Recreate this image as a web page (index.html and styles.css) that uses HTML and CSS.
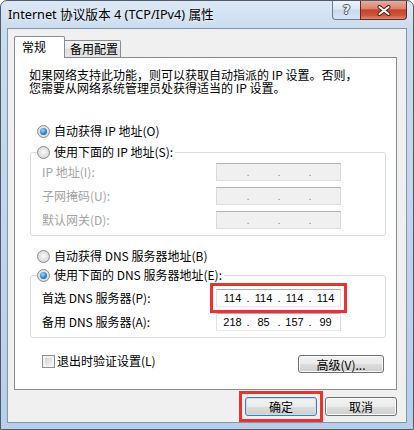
FILE: index.html
```html
<!DOCTYPE html>
<html lang="zh-CN">
<head>
<meta charset="utf-8">
<title>Internet 协议版本 4 (TCP/IPv4) 属性</title>
<link rel="stylesheet" href="styles.css">
</head>
<body>
<div class="window">
  <div class="titlebar">
    <div class="title">Internet 协议版本 4 (TCP/IPv4) 属性</div>
    <div class="caption">
      <div class="cap-btn help">?</div>
      <div class="cap-btn close">
        <svg width="14" height="11" viewBox="0 0 14 11">
          <path d="M2.5 2 L11.5 9 M11.5 2 L2.5 9" stroke="#4a1a12" stroke-width="4" stroke-linecap="round" fill="none"/>
          <path d="M2.5 2 L11.5 9 M11.5 2 L2.5 9" stroke="#ffffff" stroke-width="2.2" stroke-linecap="round" fill="none"/>
        </svg>
      </div>
    </div>
  </div>
  <div class="client">
    <div class="tabs">
      <div class="tab active">常规</div>
      <div class="tab inactive">备用配置</div>
    </div>
    <div class="panel">
      <p class="desc">如果网络支持此功能，则可以获取自动指派的 IP 设置。否则，<br>您需要从网络系统管理员处获得适当的 IP 设置。</p>

      <div class="opt first"><span class="radio on"></span><span>自动获得 IP 地址(O)</span></div>
      <fieldset class="group ipgroup">
        <legend><span class="radio"></span><span>使用下面的 IP 地址(S):</span></legend>
        <div class="row off">
          <span class="lbl">IP 地址(I):</span>
          <span class="ipbox off"><span class="seg"></span><span class="dot">.</span><span class="seg"></span><span class="dot">.</span><span class="seg"></span><span class="dot">.</span><span class="seg"></span></span>
        </div>
        <div class="row off">
          <span class="lbl">子网掩码(U):</span>
          <span class="ipbox off"><span class="seg"></span><span class="dot">.</span><span class="seg"></span><span class="dot">.</span><span class="seg"></span><span class="dot">.</span><span class="seg"></span></span>
        </div>
        <div class="row off">
          <span class="lbl">默认网关(D):</span>
          <span class="ipbox off"><span class="seg"></span><span class="dot">.</span><span class="seg"></span><span class="dot">.</span><span class="seg"></span><span class="dot">.</span><span class="seg"></span></span>
        </div>
      </fieldset>

      <div class="opt dns"><span class="radio"></span><span>自动获得 DNS 服务器地址(B)</span></div>
      <fieldset class="group dnsgroup">
        <legend><span class="radio on"></span><span>使用下面的 DNS 服务器地址(E):</span></legend>
        <div class="row">
          <span class="lbl">首选 DNS 服务器(P):</span>
          <span class="ipbox hl"><span class="seg">114</span><span class="dot">.</span><span class="seg">114</span><span class="dot">.</span><span class="seg">114</span><span class="dot">.</span><span class="seg">114</span></span>
        </div>
        <div class="row">
          <span class="lbl">备用 DNS 服务器(A):</span>
          <span class="ipbox"><span class="seg">218</span><span class="dot">.</span><span class="seg">85</span><span class="dot">.</span><span class="seg">157</span><span class="dot">.</span><span class="seg">99</span></span>
        </div>
      </fieldset>

      <div class="bottom-row">
        <div class="check"><span class="box"></span><span>退出时验证设置(L)</span></div>
        <button class="btn adv">高级(V)...</button>
      </div>
    </div>
    <div class="actions">
      <span class="hl-wrap"><button class="btn default">确定</button></span>
      <button class="btn">取消</button>
    </div>
  </div>
</div>
</body>
</html>
```

FILE: styles.css
```css
html, body {
  margin: 0;
  padding: 0;
  background: #ffffff;
}

body {
  font-family: "Noto Sans CJK SC", sans-serif;
  font-size: 12px;
  color: #000;
}

.window {
  width: 414px;
  height: 430px;
  box-sizing: border-box;
  border: 1px solid #4f5b69;
  border-radius: 7px 7px 0 0;
  background: linear-gradient(to bottom, #dce8f5 0, #cadcef 28px, #bfd4ec 60%, #b8cfe9 100%);
  display: flex;
  flex-direction: column;
  overflow: hidden;
}

.titlebar {
  height: 27px;
  flex: none;
  display: flex;
  justify-content: space-between;
  align-items: flex-start;
  padding-left: 7px;
}

.title {
  font-family: "Noto Sans", "Noto Sans CJK SC", sans-serif;
  font-size: 12.7px;
  line-height: 16px;
  padding-top: 5px;
  color: #000;
  text-shadow: 0 0 6px rgba(255, 255, 255, 0.9);
}

.caption {
  display: flex;
  margin-right: 6px;
}

.cap-btn {
  height: 19px;
  box-sizing: border-box;
  display: flex;
  align-items: center;
  justify-content: center;
}

.help {
  width: 28px;
  border: 1px solid #6b7d95;
  border-top: none;
  border-right: none;
  border-radius: 0 0 0 4px;
  background: linear-gradient(to bottom, #eef4fb 0, #dce7f4 45%, #c8d9ed 50%, #d8e5f4 100%);
  color: #f2f2f2;
  font-family: "DejaVu Sans", sans-serif;
  font-weight: bold;
  font-size: 13px;
  line-height: 16px;
  text-shadow: 1px 0 0 #4a5260, -1px 0 0 #4a5260, 0 1px 0 #4a5260, 0 -1px 0 #4a5260;
}

.close {
  width: 47px;
  border: 1px solid #5e2a22;
  border-top: none;
  border-radius: 0 0 4px 0;
  background: linear-gradient(to bottom, #e9ab9c 0, #d98470 42%, #c5432a 50%, #cf573a 80%, #e08d6f 100%);
}

.client {
  margin: 0 6px;
  height: 395px;
  flex: none;
  box-sizing: border-box;
  border: 1px solid #8196ad;
  background: #f0f0f0;
  padding: 7px 9px 0 6px;
  display: flex;
  flex-direction: column;
}

.tabs {
  display: flex;
  align-items: flex-end;
}

.tab {
  box-sizing: border-box;
  border: 1px solid #898c95;
  border-bottom: none;
  font-size: 12px;
}

.tab.active {
  width: 51px;
  height: 22px;
  margin-bottom: -1px;
  background: #fff;
  padding: 2px 0 0 7px;
  line-height: 15px;
  position: relative;
  z-index: 1;
  border-radius: 2px 2px 0 0;
}

.tab.inactive {
  width: 56px;
  height: 17px;
  border-left: none;
  padding-left: 5px;
  line-height: 16px;
  background: linear-gradient(to bottom, #f4f4f4 0, #e9e9e9 50%, #dedede 51%, #e6e6e6 100%);
  border-radius: 0 2px 0 0;
}

.panel {
  height: 333px;
  box-sizing: border-box;
  border: 1px solid #898c95;
  background: #fff;
  display: flex;
  flex-direction: column;
}

.desc {
  margin: 10px 0 0 14px;
  line-height: 13px;
}

.opt {
  display: flex;
  align-items: center;
  gap: 4px;
  height: 16px;
  line-height: 16px;
  margin-left: 22px;
}

.opt.first {
  margin-top: 29px;
}

.opt.dns {
  margin-top: 12px;
}

.group {
  margin: 5px 10px 0 15px;
  padding: 3px 0 6px 6px;
  border: 1px solid #d5dfe5;
  border-radius: 3px;
  min-width: 0;
}

.group.dnsgroup {
  margin-top: 3px;
  padding-top: 6px;
}

.group legend {
  display: flex;
  align-items: center;
  gap: 4px;
  height: 16px;
  line-height: 16px;
  padding: 0 2px 0 0;
  margin: 0;
}

.row {
  display: grid;
  grid-template-columns: 174px 125px;
  align-items: center;
  height: 18px;
  padding-left: 5px;
  line-height: 16px;
}

.row + .row {
  margin-top: 6px;
}

.row.off .lbl {
  color: #a3a3a3;
}

.ipbox {
  box-sizing: border-box;
  height: 18px;
  border: 1px solid;
  border-color: #abadb3 #dbdfe6 #e3e9ef #e2e3ea;
  background: #fff;
  display: flex;
  align-items: center;
  padding-left: 2px;
  font-family: "Liberation Sans", sans-serif;
  font-size: 11px;
  line-height: 14px;
}

.ipbox.off {
  background: #f0f0f0;
  border-color: #b4b4b4 #dadada #dedede #dadada;
  color: #8a8a8a;
}

.seg {
  width: 27px;
  text-align: center;
}

.dot {
  width: 4px;
  text-align: center;
}

.hl,
.hl-wrap {
  outline: 3px solid #ee3030;
  outline-offset: 3px;
}

.hl-wrap {
  display: flex;
}

.radio {
  width: 13px;
  height: 13px;
  flex: none;
  box-sizing: border-box;
  border-radius: 50%;
  border: 1px solid #8b8d8f;
  background: radial-gradient(circle at 50% 45%, #f8f8f8 0, #e6e6e6 45%, #cbcbcb 100%);
  display: flex;
  align-items: center;
  justify-content: center;
}

.radio.on::after {
  content: "";
  width: 7px;
  height: 7px;
  border-radius: 50%;
  background: radial-gradient(circle at 40% 35%, #a6dbff 0, #3f92db 45%, #124a84 100%);
}

.bottom-row {
  display: flex;
  justify-content: space-between;
  align-items: flex-start;
  margin: 16px 12px 0 27px;
}

.check {
  display: flex;
  align-items: center;
  gap: 2px;
  height: 14px;
  line-height: 14px;
}

.box {
  width: 13px;
  height: 13px;
  flex: none;
  box-sizing: border-box;
  border: 1px solid #8e8f8f;
  background: linear-gradient(135deg, #c9cdd3 0, #e6e7e9 60%, #f5f5f5 100%);
  box-shadow: inset 0 0 0 2px #f3f3f3;
}

.btn {
  box-sizing: border-box;
  border: 1px solid #707070;
  border-radius: 3px;
  background: linear-gradient(to bottom, #f2f2f2 0, #ebebeb 50%, #dddddd 51%, #cfcfcf 100%);
  box-shadow: inset 0 0 0 1px #fbfbfb;
  font-family: "Noto Sans CJK SC", sans-serif;
  font-size: 12px;
  line-height: 15px;
  color: #000;
  padding: 0;
  margin: 0;
}

.btn.adv {
  width: 86px;
  height: 18px;
  margin-top: 1px;
}

.btn.default {
  border-color: #3c7fb1;
  box-shadow: inset 0 0 0 1px #bfe3f8;
}

.actions {
  display: flex;
  justify-content: flex-end;
  gap: 8px;
  margin-top: 7px;
}

.actions .btn {
  width: 72px;
  height: 19px;
}
```
